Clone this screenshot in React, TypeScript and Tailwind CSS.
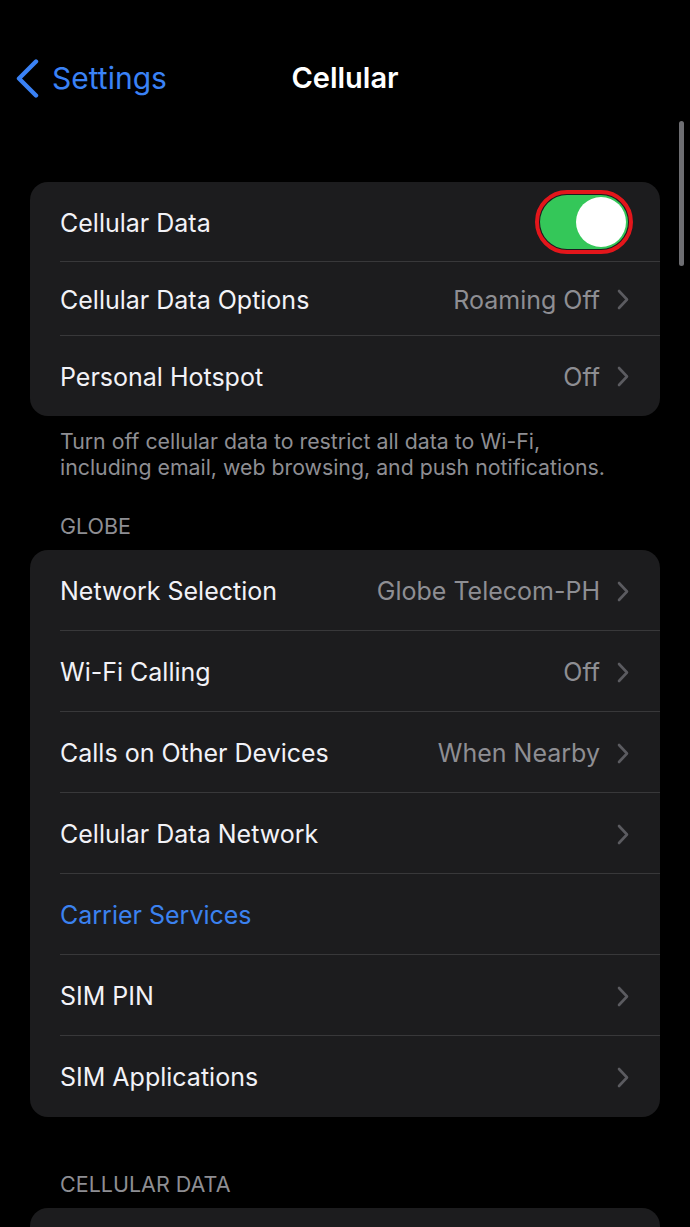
type Row = {
  label: string;
  value?: string;
  chevron?: boolean;
  blue?: boolean;
};

const globeRows: Row[] = [
  { label: 'Network Selection', value: 'Globe Telecom-PH', chevron: true },
  { label: 'Wi-Fi Calling', value: 'Off', chevron: true },
  { label: 'Calls on Other Devices', value: 'When Nearby', chevron: true },
  { label: 'Cellular Data Network', chevron: true },
  { label: 'Carrier Services', blue: true },
  { label: 'SIM PIN', chevron: true },
  { label: 'SIM Applications', chevron: true },
];

function Chevron() {
  return (
    <svg width="12" height="21" viewBox="0 0 12 21" fill="none" className="shrink-0 -mt-[2px]">
      <polyline points="2,2 10,10.5 2,19" stroke="#5b5b60" strokeWidth="2.6" strokeLinecap="round" strokeLinejoin="round" />
    </svg>
  );
}

function SettingRow({ row, last, h }: { row: Row; last?: boolean; h: string }) {
  return (
    <div className={`relative flex items-center pl-[30px] pr-[31px] pt-[3px] ${h}`}>
      <span className={`flex-1 text-[25px] ${row.blue ? 'text-[#3b82f0]' : 'text-[#f2f2f7]'}`}>{row.label}</span>
      {row.value && <span className="text-[25px] text-[#8e8e93] mr-[17px]">{row.value}</span>}
      {row.chevron && <Chevron />}
      {!last && <div className="absolute bottom-0 left-[30px] right-0 h-px bg-[#38383a]" />}
    </div>
  );
}

export default function App() {
  return (
    <div
      className="relative w-[690px] h-[1227px] overflow-hidden bg-black"
      style={{ fontFamily: 'Inter, "Noto Sans", sans-serif' }}
    >
      {/* nav bar */}
      <div className="relative flex items-center h-[40px] mt-[58px]">
        <div className="relative z-10 flex items-center pl-[15px] text-[#3a82f6]">
          <svg width="24" height="39" viewBox="0 0 24 39" fill="none">
            <polyline points="21,2.5 4,19.5 21,36.5" stroke="#3a82f6" strokeWidth="4.4" strokeLinecap="round" strokeLinejoin="round" />
          </svg>
          <span className="text-[30px] ml-[13px]">Settings</span>
        </div>
        <span className="absolute left-0 right-0 text-center text-[29px] font-semibold text-white">Cellular</span>
      </div>

      {/* scroll indicator */}
      <div className="absolute right-[6px] top-[121px] h-[145px] w-[5px] rounded-full bg-[#6e6e72]" />

      <div className="px-[30px] mt-[84px]">
        <div className="rounded-[18px] bg-[#1c1c1e] overflow-hidden">
          <div className="relative flex items-center pl-[30px] pr-[27px] h-[80px]">
            <span className="flex-1 pt-[4px] text-[25px] text-[#f2f2f7]">Cellular Data</span>
            <div className="rounded-full border-[4px] border-[#e3161b] p-px">
              <div className="flex items-center justify-end w-[88px] h-[54px] rounded-full bg-[#34c759] pr-[2px]">
                <div className="h-[50px] w-[50px] rounded-full bg-white" />
              </div>
            </div>
            <div className="absolute bottom-0 left-[30px] right-0 h-px bg-[#38383a]" />
          </div>
          <SettingRow row={{ label: 'Cellular Data Options', value: 'Roaming Off', chevron: true }} h="h-[74px]" />
          <SettingRow row={{ label: 'Personal Hotspot', value: 'Off', chevron: true }} h="h-[80px]" last />
        </div>

        <p className="px-[30px] pt-[12px] text-[21.3px] leading-[26px] text-[#8e8e93]">
          Turn off cellular data to restrict all data to Wi-Fi,
          <br />
          including email, web browsing, and push notifications.
        </p>

        <div className="px-[30px] mt-[33px] mb-[11px] text-[21.5px] leading-[26px] text-[#8e8e93]">GLOBE</div>

        <div className="rounded-[18px] bg-[#1c1c1e] overflow-hidden">
          {globeRows.map((r, i) => (
            <SettingRow key={r.label} row={r} last={i === globeRows.length - 1} h="h-[81px]" />
          ))}
        </div>

        <div className="px-[30px] mt-[54px] mb-[11px] text-[21.5px] leading-[26px] text-[#8e8e93]">CELLULAR DATA</div>

        <div className="rounded-[18px] bg-[#1c1c1e] h-[120px]" />
      </div>
    </div>
  );
}
